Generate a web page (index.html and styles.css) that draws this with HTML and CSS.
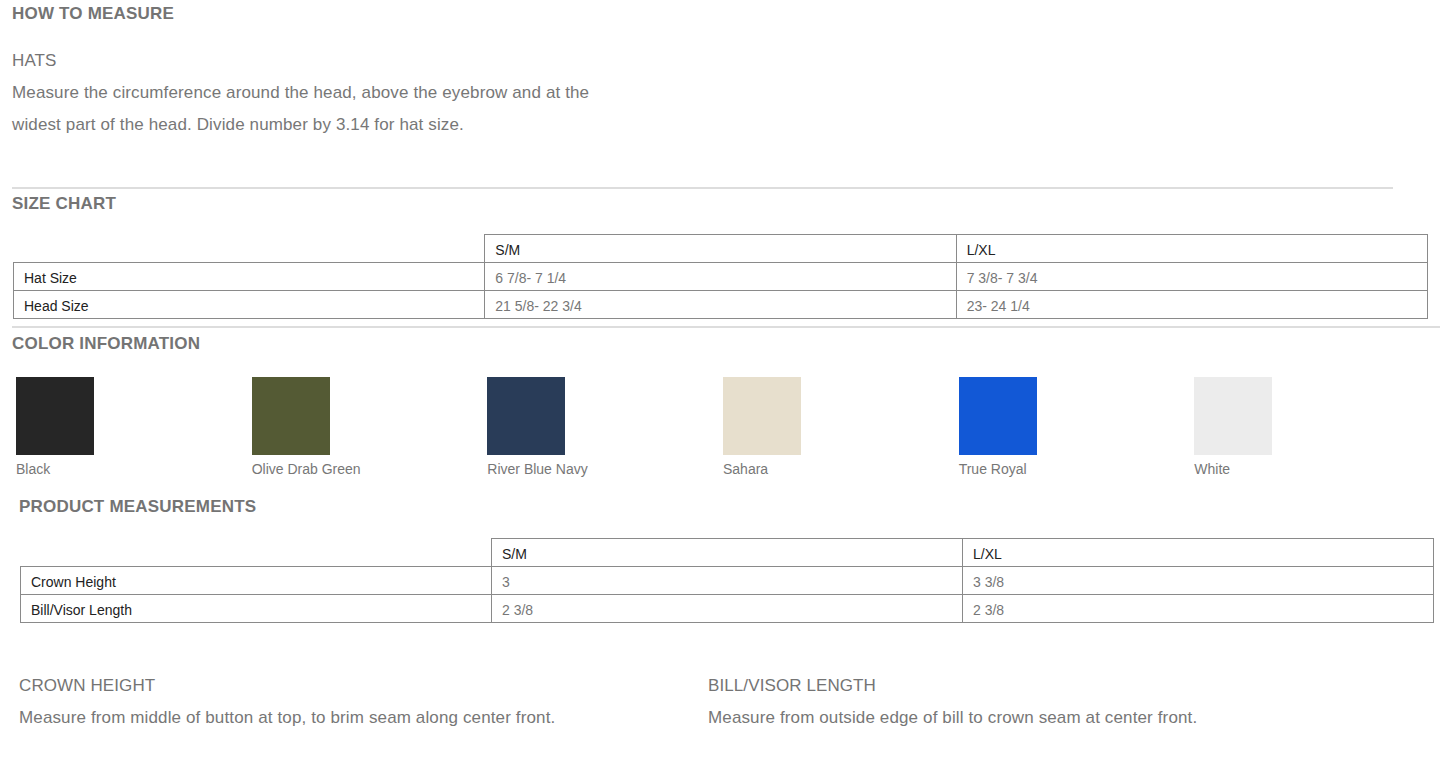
FILE: index.html
```html
<!DOCTYPE html>
<html lang="en">
<head>
<meta charset="utf-8">
<title>How to Measure</title>
<link rel="stylesheet" href="styles.css">
</head>
<body>
<div class="page">
  <h2 class="title first">HOW TO MEASURE</h2>
  <div class="measure-block">
    <div class="sub">HATS</div>
    <p class="desc">Measure the circumference around the head, above the eyebrow and at the widest part of the head. Divide number by 3.14 for hat size.</p>
  </div>

  <hr class="rule rule-short">
  <h2 class="title chart-title">SIZE CHART</h2>
  <table class="chart chart-size">
    <tr><th class="blank"></th><th>S/M</th><th>L/XL</th></tr>
    <tr><td class="label">Hat Size</td><td>6 7/8- 7 1/4</td><td>7 3/8- 7 3/4</td></tr>
    <tr><td class="label">Head Size</td><td>21 5/8- 22 3/4</td><td>23- 24 1/4</td></tr>
  </table>

  <hr class="rule rule-long">
  <h2 class="title color-title">COLOR INFORMATION</h2>
  <div class="swatches">
    <div class="swatch"><div class="chip chip-black"></div><div class="chip-name">Black</div></div>
    <div class="swatch"><div class="chip chip-olive"></div><div class="chip-name">Olive Drab Green</div></div>
    <div class="swatch"><div class="chip chip-navy"></div><div class="chip-name">River Blue Navy</div></div>
    <div class="swatch"><div class="chip chip-sahara"></div><div class="chip-name">Sahara</div></div>
    <div class="swatch"><div class="chip chip-royal"></div><div class="chip-name">True Royal</div></div>
    <div class="swatch"><div class="chip chip-white"></div><div class="chip-name">White</div></div>
  </div>

  <div class="product">
    <h2 class="title product-title">PRODUCT MEASUREMENTS</h2>
    <table class="chart chart-product">
      <tr><th class="blank"></th><th>S/M</th><th>L/XL</th></tr>
      <tr><td class="label">Crown Height</td><td>3</td><td>3 3/8</td></tr>
      <tr><td class="label">Bill/Visor Length</td><td>2 3/8</td><td>2 3/8</td></tr>
    </table>

    <div class="notes">
      <div class="note">
        <div class="sub">CROWN HEIGHT</div>
        <p class="desc">Measure from middle of button at top, to brim seam along center front.</p>
      </div>
      <div class="note">
        <div class="sub">BILL/VISOR LENGTH</div>
        <p class="desc">Measure from outside edge of bill to crown seam at center front.</p>
      </div>
    </div>
  </div>
</div>
</body>
</html>
```

FILE: styles.css
```css
html, body {
  margin: 0;
  padding: 0;
  background: #ffffff;
}

body {
  font-family: "Liberation Sans", Arial, sans-serif;
  color: #777777;
}

.page {
  padding: 0 0 40px 12px;
}

.title {
  margin: 0;
  font-size: 17px;
  line-height: 20px;
  font-weight: bold;
  color: #747474;
  letter-spacing: 0.2px;
}

.first {
  margin-top: 4px;
}

.measure-block {
  margin-top: 21px;
  width: 600px;
}

.sub {
  font-size: 17px;
  line-height: 32px;
  color: #747474;
  letter-spacing: 0.1px;
}

.desc {
  margin: 0;
  font-size: 17px;
  line-height: 32px;
  color: #777777;
  letter-spacing: 0.13px;
}

.rule {
  height: 0;
  margin: 0;
  border: 0;
  border-top: 2px solid #dddddd;
}

.rule-short {
  margin-top: 46px;
  width: 1381px;
}

.rule-long {
  margin-top: 7px;
  width: 1428px;
}

.chart-title {
  margin-top: 5px;
}

.chart {
  border-collapse: collapse;
  font-size: 14px;
  table-layout: fixed;
}

.chart th,
.chart td {
  border: 1px solid #8a8a8a;
  height: 28px;
  padding: 2px 10px 0;
  text-align: left;
  font-weight: normal;
  vertical-align: middle;
  color: #777777;
  box-sizing: border-box;
  line-height: 16px;
}

.chart th {
  color: #222222;
}

.chart td.label {
  color: #222222;
}

.chart th.blank {
  border-top: none;
  border-left: none;
}

.chart-size {
  margin-top: 20px;
  margin-left: 1px;
  width: 1415px;
}

.color-title {
  margin-top: 6px;
}

.swatches {
  margin-top: 23px;
  margin-left: 4px;
  width: 1414px;
  display: grid;
  grid-template-columns: repeat(6, 1fr);
}

.chip {
  width: 78px;
  height: 78px;
}

.chip-black { background: #262626; }
.chip-olive { background: #545a34; }
.chip-navy { background: #293c58; }
.chip-sahara { background: #e7dfcd; }
.chip-royal { background: #1258d6; }
.chip-white { background: #ececec; }

.chip-name {
  margin-top: 4px;
  font-size: 14px;
  line-height: 20px;
  color: #777777;
}

.product {
  padding-left: 7px;
}

.product-title {
  margin-top: 18px;
}

.chart-product {
  margin-top: 21px;
  margin-left: 1px;
  width: 1414px;
}

.notes {
  margin-top: 47px;
  display: grid;
  grid-template-columns: 689px 689px;
}
```
